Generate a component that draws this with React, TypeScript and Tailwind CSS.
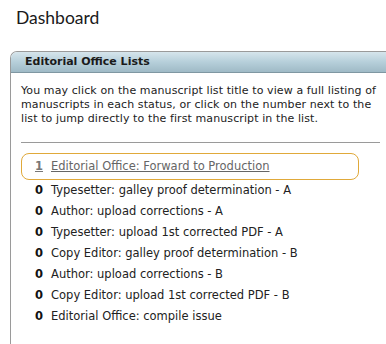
import React from "react";

const rows = [
  { n: 1, label: "Editorial Office: Forward to Production", active: true },
  { n: 0, label: "Typesetter: galley proof determination - A" },
  { n: 0, label: "Author: upload corrections - A" },
  { n: 0, label: "Typesetter: upload 1st corrected PDF - A" },
  { n: 0, label: "Copy Editor: galley proof determination - B" },
  { n: 0, label: "Author: upload corrections - B" },
  { n: 0, label: "Copy Editor: upload 1st corrected PDF - B" },
  { n: 0, label: "Editorial Office: compile issue" },
];

export default function App() {
  return (
    <div className="w-[386px] h-[344px] overflow-hidden bg-white font-['DejaVu_Sans',Verdana,sans-serif] text-[#222]">
      <h1 className="pl-4 pt-[6px] h-[51px] text-[17.5px] leading-[24px] text-[#1a1a1a] font-['Lato','Open_Sans',sans-serif]">
        Dashboard
      </h1>
      {/* panel */}
      <div className="ml-[10px] w-[400px] h-[293px] border-l border-t border-[#9a9a9a] rounded-tl-[7px]">
        <div className="h-[21px] rounded-tl-[6px] border-b border-[#7f97a2] bg-gradient-to-b from-[#d6e5ec] via-[#b6cfda] to-[#9fbac6] pl-[14px] text-[11px] font-bold leading-[20px] text-[#1a1a1a]">
          Editorial Office Lists
        </div>
        <p className="pl-[10px] pr-[30px] pt-[11px] text-[11px] leading-[14px] tracking-[0.1px]">
          You may click on the manuscript list title to view a full listing of
          manuscripts in each status, or click on the number next to the list
          to jump directly to the first manuscript in the list.
        </p>
        <div className="ml-[10px] mr-[30px] mt-[16px] border-t border-[#9a9a9a]" />
        <ul className="ml-[10px] mt-[10px] text-[11.5px]">
          {rows.map((r, i) => (
            <li
              key={i}
              className={
                r.active
                  ? "w-[338px] h-[27px] flex items-center pl-[13px] gap-[8px] border border-[#e0a93a] rounded-[8px]"
                  : "h-[21px] flex items-center pl-[14px] gap-[8px]"
              }
            >
              <span
                className={
                  r.active
                    ? "font-bold text-[#777] underline"
                    : "font-bold text-[#111]"
                }
              >
                {r.n}
              </span>
              <span className={r.active ? "text-[#666] underline" : ""}>
                {r.label}
              </span>
            </li>
          ))}
        </ul>
      </div>
    </div>
  );
}
